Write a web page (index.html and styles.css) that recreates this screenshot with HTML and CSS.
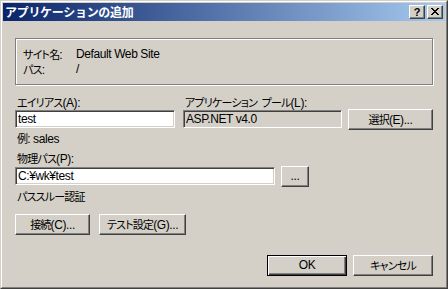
FILE: index.html
```html
<!DOCTYPE html>
<html lang="ja">
<head>
<meta charset="utf-8">
<title>アプリケーションの追加</title>
<link rel="stylesheet" href="styles.css">
</head>
<body>
<div class="window">
  <div class="frame">
    <div class="titlebar">
      <span class="title">アプリケーションの追加</span>
      <div class="caps">
        <div class="capbtn help">?</div>
        <div class="capbtn close">
          <svg width="8" height="7" viewBox="0 0 8 7"><path d="M0 0h2v1h1v1h2v-1h1v-1h2v1h-1v1h-1v1h-1v1h1v1h1v1h1v1h-2v-1h-1v-1h-2v1h-1v1h-2v-1h1v-1h1v-1h1v-1h-1v-1h-1v-1h-1z" fill="#000"/></svg>
        </div>
      </div>
    </div>
    <div class="client">
      <div class="group">
        <div class="info">
          <span><span class="ja">サイト名</span>:</span><span>Default Web Site</span>
          <span><span class="ja">パス</span>:</span><span>/</span>
        </div>
      </div>

      <div class="row labels">
        <span class="lbl w-alias"><span class="ja">エイリアス</span>(A):</span>
        <span class="lbl w-pool"><span class="ja">アプリケーション プール</span>(L):</span>
      </div>
      <div class="row fields">
        <div class="field w-alias">test</div>
        <div class="field readonly w-pool">ASP.NET v4.0</div>
        <div class="btn w-select"><span class="ja">選択</span>(E)...</div>
      </div>
      <div class="text example"><span class="ja">例</span>: sales</div>
      <div class="text phys"><span class="ja">物理パス</span>(P):</div>
      <div class="row fields path">
        <div class="field w-path">C:¥wk¥test</div>
        <div class="btn w-dots">...</div>
      </div>
      <div class="text auth"><span class="ja">パススルー認証</span></div>
      <div class="row actions">
        <div class="btn w-connect"><span class="ja">接続</span>(C)...</div>
        <div class="btn w-test"><span class="ja">テスト設定</span>(G)...</div>
      </div>
      <div class="row footer">
        <div class="btn default w-ok">OK</div>
        <div class="btn w-cancel"><span class="ja">キャンセル</span></div>
      </div>
    </div>
  </div>
</div>
</body>
</html>
```

FILE: styles.css
```css
* { box-sizing: border-box; }
html, body {
  margin: 0;
  padding: 0;
  background: #d4d0c8;
}
body {
  font-family: "Liberation Sans", "Noto Sans CJK JP", sans-serif;
  font-size: 12px;
  letter-spacing: -0.4px;
  color: #000;
}
.ja {
  font-family: "Noto Sans CJK JP", sans-serif;
  font-feature-settings: "palt";
  font-size: 11px;
  letter-spacing: -0.8px;
  word-spacing: 3px;
}
.window {
  width: 448px;
  height: 289px;
  border: 1px solid;
  border-color: #d4d0c8 #404040 #404040 #d4d0c8;
}
.frame {
  height: 100%;
  border: 1px solid;
  border-color: #fff #808080 #808080 #fff;
  padding: 1px;
  display: flex;
  flex-direction: column;
}
.titlebar {
  height: 18px;
  flex: none;
  background: linear-gradient(to right, #0a246a, #a6caf0);
  display: flex;
  align-items: flex-start;
  justify-content: space-between;
  padding: 2px 2px 0 2px;
}
.title {
  color: #fff;
  font-family: "Noto Sans CJK JP", sans-serif;
  font-weight: bold;
  font-size: 12px;
  line-height: 14px;
  letter-spacing: -0.3px;
}
.caps {
  display: flex;
  gap: 2px;
}
.capbtn {
  width: 16px;
  height: 14px;
  background: #d4d0c8;
  border: 1px solid;
  border-color: #fff #404040 #404040 #fff;
  box-shadow: inset -1px -1px #808080;
  display: flex;
  align-items: center;
  justify-content: center;
}
.help {
  font-family: "Liberation Sans", sans-serif;
  font-weight: bold;
  font-size: 11px;
  line-height: 12px;
  letter-spacing: 0;
  padding-bottom: 1px;
}
.close svg { display: block; margin-right: 1px; margin-bottom: 1px; }
.client {
  margin-top: 1px;
  flex: 1;
  padding: 16px 12px 0 12px;
  display: flex;
  flex-direction: column;
}
.group {
  height: 47px;
  border: 1px solid #808080;
  box-shadow: inset 1px 1px #fff, 1px 1px #fff;
  padding: 8px 7px;
}
.info {
  display: grid;
  grid-template-columns: 53px auto;
  line-height: 14px;
}
.row { display: flex; }
.labels {
  margin-top: 11px;
  height: 13px;
  line-height: 13px;
}
.lbl { padding-left: 2px; white-space: nowrap; }
.w-alias { width: 160px; }
.w-pool { width: 159px; margin-left: 8px; }
.w-select { width: 85px; margin-left: 6px; }
.fields {
  height: 21px;
  align-items: flex-start;
}
.fields .field { margin-top: 1px; }
.field {
  height: 18px;
  line-height: 16px;
  background: #fff;
  border: 1px solid;
  border-color: #808080 #fff #fff #808080;
  box-shadow: inset 1px 1px #404040, inset -1px -1px #d4d0c8;
  padding-left: 2px;
  white-space: nowrap;
}
.field.readonly { background: #d4d0c8; }
.btn {
  height: 21px;
  line-height: 19px;
  text-align: center;
  background: #d4d0c8;
  border: 1px solid;
  border-color: #fff #404040 #404040 #fff;
  box-shadow: inset -1px -1px #808080;
  white-space: nowrap;
}
.btn.default {
  border: 1px solid #000;
  box-shadow: inset 1px 1px #fff, inset -1px -1px #404040, inset -2px -2px #808080;
}
.text {
  height: 13px;
  line-height: 13px;
  padding-left: 2px;
}
.example { margin-top: 2px; }
.phys { margin-top: 7px; }
.path { margin-top: 1px; }
.w-path { width: 260px; }
.w-dots { width: 28px; margin-left: 6px; }
.auth { margin-top: 3px; }
.actions { margin-top: 11px; }
.w-connect { width: 75px; }
.w-test { width: 87px; margin-left: 9px; }
.footer {
  margin-top: 20px;
  justify-content: flex-end;
}
.w-ok { width: 80px; }
.w-cancel { width: 80px; margin-left: 6px; }
```
